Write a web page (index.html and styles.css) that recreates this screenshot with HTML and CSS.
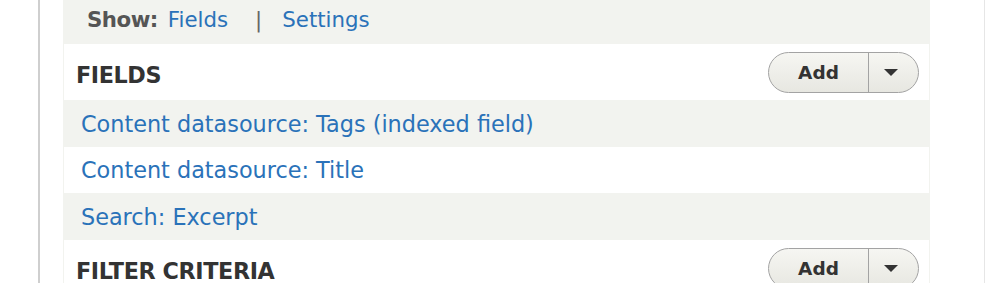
FILE: index.html
```
<!DOCTYPE html>
<html>
<head>
<meta charset="utf-8">
<link rel="stylesheet" href="styles.css">
</head>
<body>
<div class="frame">
  <div class="panel">
    <div class="show-bar">
      <span class="show-label">Show:</span>
      <a class="link" href="#">Fields</a>
      <span class="sep">|</span>
      <a class="link" href="#">Settings</a>
    </div>
    <div class="section-head">
      <h2 class="section-title">FIELDS</h2>
      <div class="dropbutton">
        <span class="drop-main">Add</span>
        <span class="drop-toggle"><span class="caret"></span></span>
      </div>
    </div>
    <div class="row odd"><a class="link" href="#">Content datasource: Tags (indexed field)</a></div>
    <div class="row even"><a class="link" href="#">Content datasource: Title</a></div>
    <div class="row odd"><a class="link" href="#">Search: Excerpt</a></div>
    <div class="section-head">
      <h2 class="section-title">FILTER CRITERIA</h2>
      <div class="dropbutton">
        <span class="drop-main">Add</span>
        <span class="drop-toggle"><span class="caret"></span></span>
      </div>
    </div>
  </div>
</div>
</body>
</html>
```

FILE: styles.css
```
html, body {
  margin: 0;
  padding: 0;
  background: #fff;
  height: 283px;
  overflow: hidden;
}
body {
  font-family: "DejaVu Sans", "Liberation Sans", sans-serif;
  color: #333;
}
.frame {
  margin-left: 38px;
  height: 283px;
  border-left: 2px solid #cfcfcf;
  border-right: 1px solid #e6e6e6;
  padding: 0 54px 0 23px;
  box-sizing: content-box;
  width: 867px;
}
.panel {
  background: #f2f3ef;
  padding: 0 1px;
  height: 283px;
}
.show-bar {
  height: 44px;
  display: flex;
  align-items: center;
  padding-left: 23px;
  font-size: 21.3px;
  padding-bottom: 5px;
  box-sizing: border-box;
}
.show-label {
  font-weight: bold;
  color: #555;
  margin-right: 10px;
  letter-spacing: -0.5px;
}
.sep {
  color: #666;
  margin: 0 20px 0 27px;
}
.link {
  color: #2a72b9;
  text-decoration: none;
}
.section-head {
  background: #fff;
  height: 56px;
  display: flex;
  align-items: center;
  justify-content: space-between;
  padding: 0 10px 0 12px;
}
.section-title {
  margin: 0;
  font-size: 22.3px;
  font-weight: bold;
  color: #333;
  letter-spacing: -0.4px;
  padding-top: 5px;
}
.dropbutton {
  display: flex;
  height: 41px;
  box-sizing: border-box;
  border: 1px solid #a3a3a3;
  border-radius: 21px;
  background: linear-gradient(#f6f6f2, #e7e7e1);
  overflow: hidden;
}
.drop-main {
  width: 99px;
  display: flex;
  align-items: center;
  justify-content: center;
  font-weight: bold;
  font-size: 18.5px;
  color: #333;
  border-right: 1px solid #a3a3a3;
}
.drop-toggle {
  width: 49px;
  display: flex;
  align-items: center;
  justify-content: center;
}
.caret {
  width: 0;
  height: 0;
  border-left: 7px solid transparent;
  border-right: 7px solid transparent;
  border-top: 7px solid #333;
  margin-right: 5px;
  margin-top: 1px;
}
.row {
  display: flex;
  align-items: center;
  padding-left: 17px;
  font-size: 22.35px;
}
.row.odd { background: #f2f3ef; height: 47px; }
.row.even { background: #fff; height: 46px; }
```
